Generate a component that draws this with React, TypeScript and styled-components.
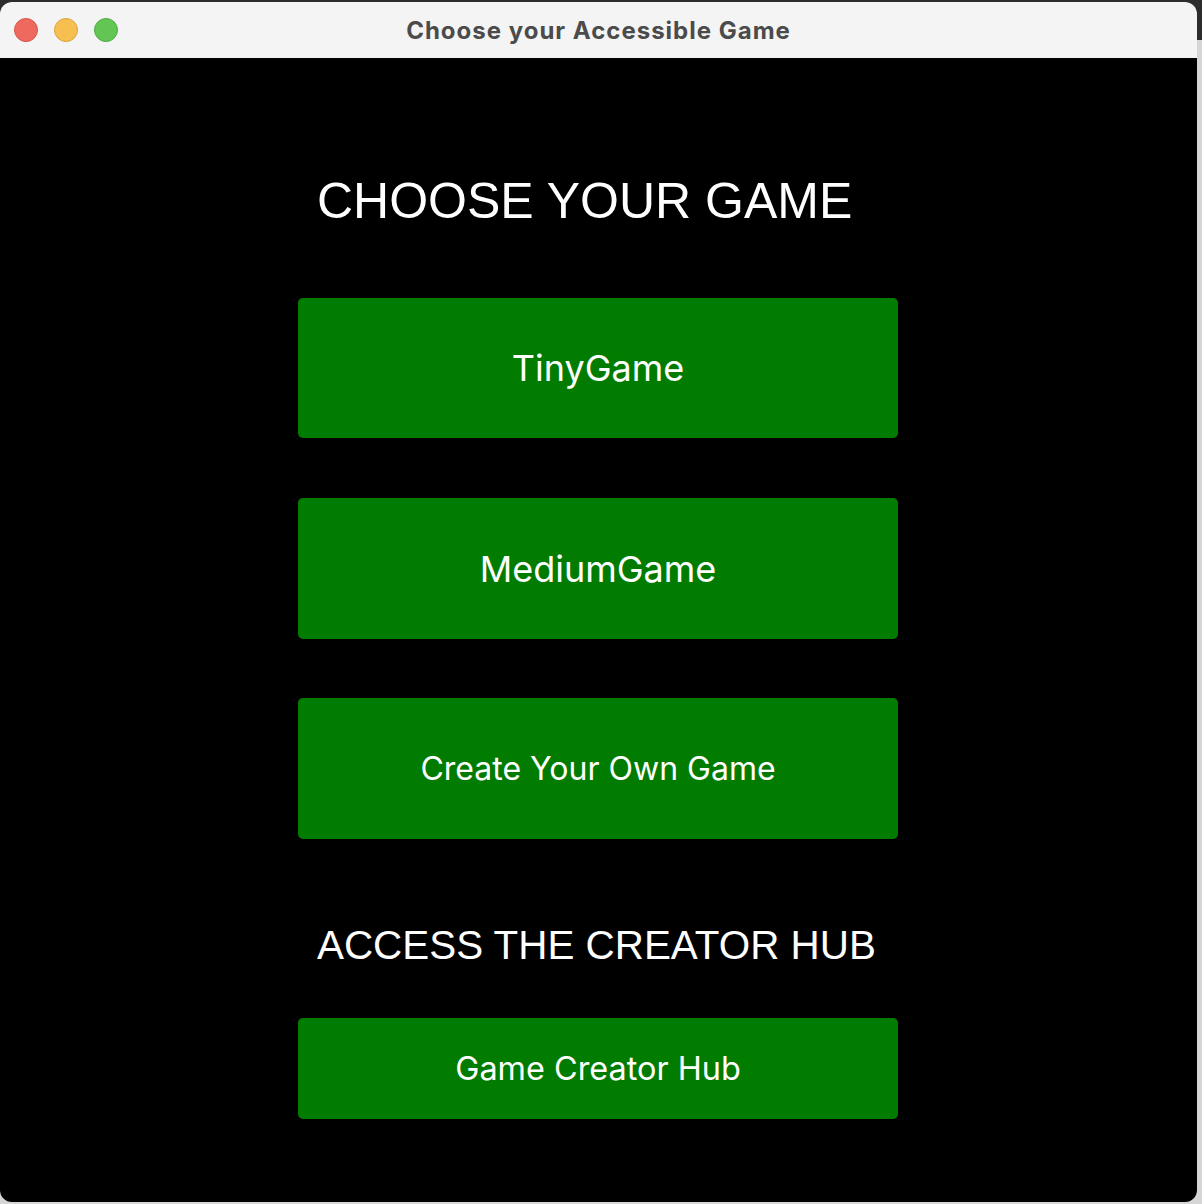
import React from "react";
import styled, { createGlobalStyle } from "styled-components";

const GlobalStyle = createGlobalStyle`
  html, body {
    margin: 0;
    padding: 0;
  }
  body {
    width: 1202px;
    height: 1204px;
    overflow: hidden;
    background: linear-gradient(#2c2c2e 0, #2c2c2e 40px, #d6d6d6 40px, #d6d6d6 100%);
    font-family: "Liberation Sans", Arial, sans-serif;
  }
`;

const Desktop = styled.div`
  width: 1202px;
  height: 1204px;
  padding-top: 2px;
  box-sizing: border-box;
`;

const Window = styled.div`
  width: 1197px;
  height: 1200px;
  border-radius: 12px;
  overflow: hidden;
  display: flex;
  flex-direction: column;
  background: #000;
`;

const TitleBar = styled.div`
  height: 56px;
  flex: none;
  background: #f3f4f3;
  display: flex;
  align-items: center;
  position: relative;
  padding-left: 14px;
  gap: 16px;
`;

const Light = styled.span<{ $color: string; $ring: string }>`
  width: 24px;
  height: 24px;
  border-radius: 50%;
  box-sizing: border-box;
  background: ${(p) => p.$color};
  border: 1px solid ${(p) => p.$ring};
`;

const Title = styled.div`
  position: absolute;
  inset: 0;
  display: flex;
  align-items: center;
  justify-content: center;
  font-family: Inter, "Liberation Sans", Arial, sans-serif;
  font-weight: 700;
  font-size: 24px;
  letter-spacing: 1px;
  color: #4b4b4b;
  pointer-events: none;
`;

const Content = styled.main`
  flex: 1;
  display: flex;
  flex-direction: column;
  align-items: flex-start;
  padding-top: 118px;
  padding-left: 298px;
`;

const Column = styled.div`
  width: 600px;
  display: flex;
  flex-direction: column;
`;

const Heading = styled.h1<{ $size: number; $after: number }>`
  margin: 0 0 ${(p) => p.$after}px 0;
  padding-left: 19px;
  font-family: "Liberation Sans", Arial, sans-serif;
  font-weight: 400;
  font-size: ${(p) => p.$size}px;
  line-height: ${(p) => p.$size}px;
  color: #fff;
  white-space: nowrap;
`;

const GameButton = styled.button<{ $height: number; $size: number; $after?: number }>`
  height: ${(p) => p.$height}px;
  margin: 0 0 ${(p) => p.$after ?? 0}px 0;
  width: 100%;
  border: none;
  border-radius: 5px;
  background: #017c00;
  color: #fff;
  font-family: Inter, Roboto, "Liberation Sans", sans-serif;
  font-size: ${(p) => p.$size}px;
  font-weight: 400;
  cursor: pointer;
  padding: 0;
`;

export default function App() {
  return (
    <>
      <GlobalStyle />
      <Desktop>
        <Window>
          <TitleBar>
            <Light $color="#ee6a5f" $ring="#d9534a" />
            <Light $color="#f6c050" $ring="#dea23a" />
            <Light $color="#62c554" $ring="#4fad43" />
            <Title>Choose your Accessible Game</Title>
          </TitleBar>
          <Content>
            <Column>
              <Heading $size={50} $after={72}>CHOOSE YOUR GAME</Heading>
              <GameButton $height={140} $size={36} $after={60}>TinyGame</GameButton>
              <GameButton $height={141} $size={36} $after={59}>MediumGame</GameButton>
              <GameButton $height={141} $size={32} $after={86}>Create Your Own Game</GameButton>
              <Heading as="h2" $size={40.4} $after={53}>ACCESS THE CREATOR HUB</Heading>
              <GameButton $height={101} $size={32.4}>Game Creator Hub</GameButton>
            </Column>
          </Content>
        </Window>
      </Desktop>
    </>
  );
}
